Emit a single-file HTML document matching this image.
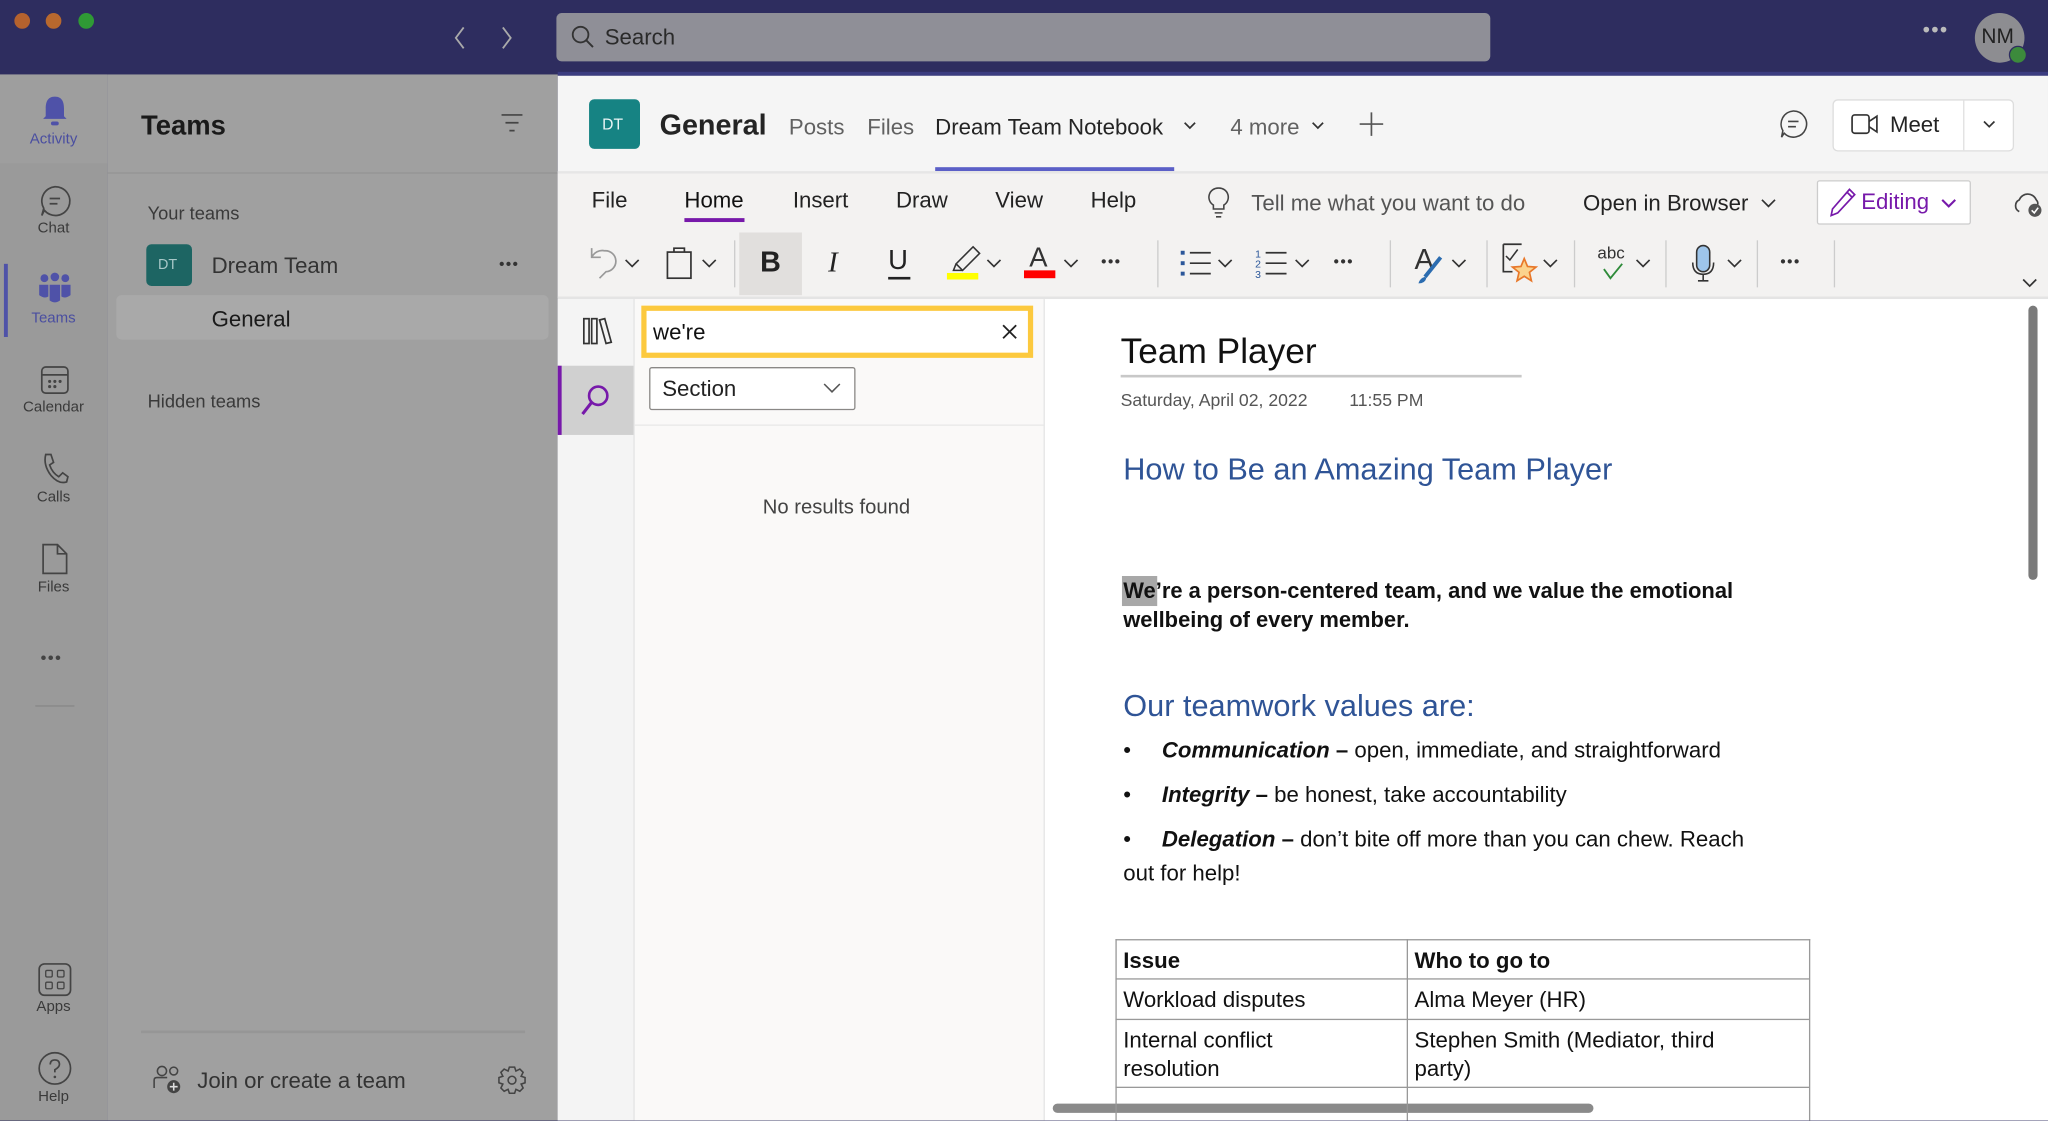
<!DOCTYPE html>
<html><head><meta charset="utf-8">
<style>
html,body{margin:0;padding:0;width:2048px;height:1120px;overflow:hidden;background:#2e2d5f;}
#w{position:absolute;left:0;top:0;width:1568px;height:858px;transform:scale(1.30612);transform-origin:0 0;font-family:"Liberation Sans",sans-serif;overflow:hidden;}
.a{position:absolute;}
.t{position:absolute;white-space:nowrap;line-height:1;}
svg{position:absolute;overflow:visible;}
.rl{position:absolute;left:0;width:82px;text-align:center;font-size:11.5px;color:#3a3a3a;line-height:1;}
.chev{stroke:#333;stroke-width:1.3;fill:none;}
.doc{color:#111;font-size:17px;}
</style></head><body><div id="w">
<div class="a" style="left:0;top:0;width:1568px;height:57px;background:#2e2d5f;"></div>
<div class="a" style="left:427px;top:55px;width:1141px;height:3px;background:#3b3c80;"></div>
<div class="a" style="left:11px;top:10px;width:12px;height:12px;border-radius:50%;background:#b5622e;"></div>
<div class="a" style="left:35px;top:10px;width:12px;height:12px;border-radius:50%;background:#b8682e;"></div>
<div class="a" style="left:60px;top:10px;width:12px;height:12px;border-radius:50%;background:#2f9a35;"></div>
<svg style="left:346px;top:20px" width="12" height="18"><path d="M9 1 L3 9 L9 17" stroke="#aaa" stroke-width="1.4" fill="none"/></svg>
<svg style="left:382px;top:20px" width="12" height="18"><path d="M3 1 L9 9 L3 17" stroke="#aaa" stroke-width="1.4" fill="none"/></svg>
<div class="a" style="left:426px;top:10px;width:715px;height:37px;background:#8f8f97;border-radius:4px;"></div>
<svg style="left:437px;top:19px" width="20" height="20"><circle cx="7.5" cy="7.5" r="6" stroke="#333" stroke-width="1.4" fill="none"/><path d="M12 12 L17 17" stroke="#333" stroke-width="1.5"/></svg>
<div class="t" style="left:463px;top:20px;font-size:17px;color:#2a2a2a;">Search</div>
<div class="t" style="left:1472px;top:16px;font-size:16px;color:#bbb;letter-spacing:1px">•••</div>
<div class="a" style="left:1512px;top:10px;width:38px;height:38px;border-radius:50%;background:#8d8d91;"></div>
<div class="t" style="left:1517px;top:21px;font-size:16px;color:#222;">NM</div>
<div class="a" style="left:1538px;top:35px;width:12px;height:12px;border-radius:50%;background:#3c8a3c;border:1px solid #2e2d5f;"></div>
<div class="a" style="left:0;top:57px;width:82px;height:801px;background:#9a9a9a;"></div>
<div class="a" style="left:0;top:57px;width:82px;height:68px;background:#9e9e9e;"></div>
<svg style="left:30px;top:72px" width="24" height="26"><path d="M12 2 C6 2 5 7 5 11 L5 17 L3 19 L21 19 L19 17 L19 11 C19 7 18 2 12 2Z" fill="#4f52a8"/><rect x="9" y="21" width="6" height="3" rx="1.5" fill="#4f52a8"/></svg>
<div class="rl" style="top:102px;color:#4a4ea0;">Activity</div>
<svg style="left:29px;top:141px" width="26" height="26"><path d="M13 2 A11 11 0 1 1 5 20 L3 24 L4.5 18.5 A11 11 0 0 1 13 2Z" stroke="#444" stroke-width="1.3" fill="none"/><path d="M9 11 H17 M9 15 H15" stroke="#444" stroke-width="1.3"/></svg>
<div class="rl" style="top:170px;">Chat</div>
<div class="a" style="left:3px;top:202px;width:3px;height:56px;background:#4f52a8;"></div>
<svg style="left:28px;top:208px" width="28" height="26"><circle cx="6" cy="5" r="3" fill="#4f52a8"/><circle cx="14" cy="4" r="3.3" fill="#4f52a8"/><circle cx="22" cy="5" r="3" fill="#4f52a8"/><path d="M2 10 H9 V19 Q6 21 2 18Z M10 10 H18 V22 Q14 25 10 22Z M19 10 H26 V18 Q22 21 19 19Z" fill="#4f52a8"/></svg>
<div class="rl" style="top:239px;color:#4a4ea0;">Teams</div>
<svg style="left:30px;top:279px" width="24" height="24"><rect x="2" y="2" width="20" height="20" rx="3" stroke="#444" stroke-width="1.3" fill="none"/><path d="M2 8 H22" stroke="#444" stroke-width="1.3"/><circle cx="8" cy="13" r="1.2" fill="#444"/><circle cx="12" cy="13" r="1.2" fill="#444"/><circle cx="16" cy="13" r="1.2" fill="#444"/><circle cx="8" cy="17" r="1.2" fill="#444"/><circle cx="12" cy="17" r="1.2" fill="#444"/></svg>
<div class="rl" style="top:307px;">Calendar</div>
<svg style="left:31px;top:346px" width="22" height="26"><path d="M4 2 L8 2 L10 8 L7 10 Q9 16 14 19 L17 16 L21 19 L20 23 Q14 25 8 18 Q2 10 4 2Z" stroke="#444" stroke-width="1.3" fill="none"/></svg>
<div class="rl" style="top:376px;">Calls</div>
<svg style="left:31px;top:415px" width="22" height="26"><path d="M2 2 H13 L20 9 V24 H2Z M13 2 V9 H20" stroke="#444" stroke-width="1.3" fill="none"/></svg>
<div class="rl" style="top:445px;">Files</div>
<div class="t" style="left:31px;top:497px;font-size:13px;color:#444;letter-spacing:1px">•••</div>
<div class="a" style="left:27px;top:540px;width:30px;height:1px;background:#888;"></div>
<svg style="left:29px;top:737px" width="26" height="26"><rect x="1" y="1" width="24" height="24" rx="4" stroke="#444" stroke-width="1.3" fill="none"/><rect x="6" y="6" width="5" height="5" rx="1" stroke="#444" fill="none"/><rect x="15" y="6" width="5" height="5" rx="1" stroke="#444" fill="none"/><rect x="6" y="15" width="5" height="5" rx="1" stroke="#444" fill="none"/><rect x="15" y="15" width="5" height="5" rx="1" stroke="#444" fill="none"/></svg>
<div class="rl" style="top:766px;">Apps</div>
<svg style="left:29px;top:805px" width="26" height="26"><circle cx="13" cy="13" r="12" stroke="#444" stroke-width="1.3" fill="none"/><path d="M9.5 10 Q9.5 6.5 13 6.5 Q16.5 6.5 16.5 10 Q16.5 12 13 14 V16" stroke="#444" stroke-width="1.3" fill="none"/><circle cx="13" cy="19.5" r="1" fill="#444"/></svg>
<div class="rl" style="top:835px;">Help</div>
<div class="a" style="left:82px;top:57px;width:345px;height:801px;background:#a0a0a0;"></div>
<div class="t" style="left:108px;top:86px;font-size:21px;font-weight:bold;color:#1a1a1a;">Teams</div>
<svg style="left:383px;top:87px" width="18" height="14"><path d="M1 1 H17 M4 7 H14 M7 13 H11" stroke="#444" stroke-width="1.3"/></svg>
<div class="a" style="left:82px;top:132px;width:345px;height:1px;background:#949494;"></div>
<div class="t" style="left:113px;top:156px;font-size:14px;color:#3a3a3a;">Your teams</div>
<div class="a" style="left:112px;top:187px;width:35px;height:32px;border-radius:4px;background:#1d6563;"></div>
<div class="t" style="left:121px;top:198px;font-size:11px;color:#a8c8c8;">DT</div>
<div class="t" style="left:162px;top:195px;font-size:17px;color:#333;">Dream Team</div>
<div class="t" style="left:382px;top:196px;font-size:12px;color:#333;letter-spacing:1px">•••</div>
<div class="a" style="left:89px;top:226px;width:331px;height:34px;border-radius:4px;background:#a9a9a9;"></div>
<div class="t" style="left:162px;top:236px;font-size:17px;color:#1a1a1a;">General</div>
<div class="t" style="left:113px;top:300px;font-size:14px;color:#3a3a3a;">Hidden teams</div>
<div class="a" style="left:108px;top:789px;width:294px;height:2px;background:#969696;"></div>
<svg style="left:117px;top:815px" width="22" height="24"><circle cx="7" cy="5" r="3.5" stroke="#444" stroke-width="1.2" fill="none"/><circle cx="16" cy="5" r="3" stroke="#444" stroke-width="1.2" fill="none"/><path d="M1 18 V12 Q1 10 3 10 H11" stroke="#444" stroke-width="1.2" fill="none"/><circle cx="16" cy="17" r="5" fill="#444"/><path d="M16 14 V20 M13 17 H19" stroke="#ddd" stroke-width="1.2"/></svg>
<div class="t" style="left:151px;top:819px;font-size:17px;color:#333;">Join or create a team</div>
<svg style="left:381px;top:816px" width="22" height="22"><circle cx="11" cy="11" r="3" stroke="#444" stroke-width="1.2" fill="none"/><path d="M9 1 H13 L14 4 L17 2.5 L19.5 5 L18 8 L21 9 V13 L18 14 L19.5 17 L17 19.5 L14 18 L13 21 H9 L8 18 L5 19.5 L2.5 17 L4 14 L1 13 V9 L4 8 L2.5 5 L5 2.5 L8 4Z" stroke="#444" stroke-width="1.2" fill="none"/></svg>
<div class="a" style="left:427px;top:58px;width:1141px;height:800px;background:#f5f5f5;"></div>
<div class="a" style="left:451px;top:76px;width:39px;height:38px;border-radius:4px;background:#168383;"></div>
<div class="t" style="left:461px;top:89px;font-size:12px;color:#e8f4f4;">DT</div>
<div class="t" style="left:505px;top:85px;font-size:22px;font-weight:bold;color:#242424;">General</div>
<div class="t" style="left:604px;top:89px;font-size:17px;color:#616161;">Posts</div>
<div class="t" style="left:664px;top:89px;font-size:17px;color:#616161;">Files</div>
<div class="t" style="left:716px;top:89px;font-size:17px;color:#242424;">Dream Team Notebook</div>
<svg style="left:906px;top:93px" width="10" height="7"><path d="M1 1 L5 5 L9 1" class="chev" stroke="#666"/></svg>
<div class="t" style="left:942px;top:89px;font-size:17px;color:#616161;">4 more</div>
<svg style="left:1004px;top:93px" width="10" height="7"><path d="M1 1 L5 5 L9 1" class="chev" stroke="#666"/></svg>
<svg style="left:1041px;top:86px" width="18" height="18"><path d="M9 0 V18 M0 9 H18" stroke="#555" stroke-width="1.3"/></svg>
<div class="a" style="left:716px;top:128px;width:183px;height:3px;background:#5b5fc7;"></div>
<div class="a" style="left:427px;top:131px;width:1141px;height:2px;background:#e6e6e6;"></div>
<svg style="left:1362px;top:84px" width="22" height="22"><path d="M11 1 A10 10 0 1 1 4 18 L2 21 L3 16 A10 10 0 0 1 11 1Z" stroke="#444" stroke-width="1.2" fill="none"/><path d="M7 9 H15 M7 13 H13" stroke="#444" stroke-width="1.2"/></svg>
<div class="a" style="left:1403px;top:76px;width:137px;height:38px;background:#fff;border:1px solid #ddd;border-radius:4px;"></div>
<div class="a" style="left:1503px;top:77px;width:1px;height:38px;background:#e0e0e0;"></div>
<svg style="left:1417px;top:86px" width="22" height="18"><rect x="1" y="2" width="13" height="14" rx="2" stroke="#333" stroke-width="1.3" fill="none"/><path d="M14 7 L20 3 V15 L14 11" stroke="#333" stroke-width="1.3" fill="none"/></svg>
<div class="t" style="left:1447px;top:87px;font-size:17px;color:#242424;">Meet</div>
<svg style="left:1518px;top:92px" width="10" height="7"><path d="M1 1 L5 5 L9 1" class="chev"/></svg>
<div class="a" style="left:427px;top:133px;width:1141px;height:95px;background:#f3f2f1;"></div>
<div class="a" style="left:427px;top:227px;width:1141px;height:2px;background:#e4e4e4;"></div>
<div class="t" style="left:453px;top:145px;font-size:17px;color:#222;">File</div>
<div class="t" style="left:524px;top:145px;font-size:17px;color:#111;">Home</div>
<div class="a" style="left:524px;top:167px;width:46px;height:3px;background:#7719aa;"></div>
<div class="t" style="left:607px;top:145px;font-size:17px;color:#222;">Insert</div>
<div class="t" style="left:686px;top:145px;font-size:17px;color:#222;">Draw</div>
<div class="t" style="left:762px;top:145px;font-size:17px;color:#222;">View</div>
<div class="t" style="left:835px;top:145px;font-size:17px;color:#222;">Help</div>
<svg style="left:924px;top:143px" width="18" height="24"><path d="M9 1 A7 7 0 0 0 5 14 V17 H13 V14 A7 7 0 0 0 9 1Z M6 20 H12 M7 23 H11" stroke="#444" stroke-width="1.2" fill="none"/></svg>
<div class="t" style="left:958px;top:147px;font-size:17px;color:#555;">Tell me what you want to do</div>
<div class="t" style="left:1212px;top:147px;font-size:17px;color:#222;">Open in Browser</div>
<svg style="left:1348px;top:152px" width="12" height="8"><path d="M1 1 L6 6 L11 1" class="chev"/></svg>
<div class="a" style="left:1391px;top:138px;width:116px;height:32px;background:#fff;border:1px solid #ccc;border-radius:2px;"></div>
<svg style="left:1401px;top:144px" width="20" height="22"><path d="M15 1 L19 5 L6 19 L1 21 L2 16Z M13 3 L17 7" stroke="#7719aa" stroke-width="1.3" fill="none"/></svg>
<div class="t" style="left:1425px;top:146px;font-size:17px;color:#7719aa;">Editing</div>
<svg style="left:1486px;top:152px" width="12" height="8"><path d="M1 1 L6 6 L11 1" stroke="#7719aa" stroke-width="1.6" fill="none"/></svg>
<svg style="left:1540px;top:145px" width="24" height="22"><path d="M6 17 A5 5 0 0 1 6 8 A7 7 0 0 1 19 8 A4 4 0 0 1 20 12" stroke="#444" stroke-width="1.3" fill="none"/><circle cx="18" cy="16" r="5" fill="#555"/><path d="M15.5 16 L17.5 18 L20.5 14" stroke="#fff" stroke-width="1.2" fill="none"/></svg>
<svg style="left:449px;top:188px" width="24" height="26"><path d="M4 2 V9 H11 M4 9 A9 9 0 0 1 14 4 A8 8 0 0 1 15 20 L10 25" stroke="#999" stroke-width="1.3" fill="none"/></svg>
<svg style="left:478px;top:198px" width="12" height="8"><path d="M1 1 L6 6 L11 1" class="chev"/></svg>
<svg style="left:510px;top:188px" width="20" height="26"><rect x="1" y="5" width="18" height="20" stroke="#333" stroke-width="1.3" fill="none"/><path d="M6 5 V2 H14 V5" stroke="#333" stroke-width="1.3" fill="none"/></svg>
<svg style="left:537px;top:198px" width="12" height="8"><path d="M1 1 L6 6 L11 1" class="chev"/></svg>
<div class="a" style="left:562px;top:184px;width:1px;height:36px;background:#ccc;"></div>
<div class="a" style="left:566px;top:178px;width:48px;height:48px;background:#e1dfdd;"></div>
<div class="t" style="left:582px;top:190px;font-size:22px;font-weight:bold;color:#222;">B</div>
<div class="t" style="left:634px;top:190px;font-size:22px;font-style:italic;color:#222;font-family:'Liberation Serif',serif;">I</div>
<div class="t" style="left:680px;top:189px;font-size:21px;color:#222;">U</div>
<div class="a" style="left:680px;top:212px;width:17px;height:1.5px;background:#222;"></div>
<svg style="left:727px;top:188px" width="24" height="24"><path d="M18 1 L23 6 L10 19 L5 14Z M5 14 L3 19 L10 19" stroke="#333" stroke-width="1.2" fill="none"/></svg>
<div class="a" style="left:725px;top:209px;width:24px;height:5px;background:#ffff00;"></div>
<svg style="left:755px;top:198px" width="12" height="8"><path d="M1 1 L6 6 L11 1" class="chev"/></svg>
<div class="t" style="left:788px;top:187px;font-size:21px;color:#333;">A</div>
<div class="a" style="left:784px;top:207px;width:24px;height:6px;background:#f00;"></div>
<svg style="left:814px;top:198px" width="12" height="8"><path d="M1 1 L6 6 L11 1" class="chev"/></svg>
<div class="t" style="left:843px;top:194px;font-size:12px;color:#333;letter-spacing:1px">•••</div>
<div class="a" style="left:886px;top:184px;width:1px;height:36px;background:#ccc;"></div>
<svg style="left:903px;top:189px" width="26" height="24"><rect x="1" y="3" width="3" height="3" fill="#2b579a"/><rect x="1" y="11" width="3" height="3" fill="#2b579a"/><rect x="1" y="19" width="3" height="3" fill="#2b579a"/><path d="M8 4.5 H24 M8 12.5 H24 M8 20.5 H24" stroke="#333" stroke-width="1.3"/></svg>
<svg style="left:932px;top:198px" width="12" height="8"><path d="M1 1 L6 6 L11 1" class="chev"/></svg>
<svg style="left:961px;top:189px" width="26" height="26"><text x="0" y="8" font-size="8" fill="#2b579a" font-family="Liberation Sans">1</text><text x="0" y="16" font-size="8" fill="#2b579a" font-family="Liberation Sans">2</text><text x="0" y="24" font-size="8" fill="#2b579a" font-family="Liberation Sans">3</text><path d="M8 4.5 H24 M8 12.5 H24 M8 20.5 H24" stroke="#333" stroke-width="1.3"/></svg>
<svg style="left:991px;top:198px" width="12" height="8"><path d="M1 1 L6 6 L11 1" class="chev"/></svg>
<div class="t" style="left:1021px;top:194px;font-size:12px;color:#333;letter-spacing:1px">•••</div>
<div class="a" style="left:1064px;top:184px;width:1px;height:36px;background:#ccc;"></div>
<div class="t" style="left:1083px;top:188px;font-size:22px;color:#333;">A</div>
<svg style="left:1085px;top:196px" width="20" height="22"><path d="M18 1 L6 16" stroke="#2b6cb0" stroke-width="3"/><path d="M6 16 Q2 17 1 21 Q6 21 7 17Z" fill="#2b6cb0"/></svg>
<svg style="left:1111px;top:198px" width="12" height="8"><path d="M1 1 L6 6 L11 1" class="chev"/></svg>
<div class="a" style="left:1138px;top:184px;width:1px;height:36px;background:#ccc;"></div>
<svg style="left:1150px;top:186px" width="28" height="30"><path d="M1 1 H15 M1 1 V22 H8" stroke="#333" stroke-width="1.3" fill="none"/><path d="M3 10 L6 13 L12 5" stroke="#333" stroke-width="1.2" fill="none"/><path d="M17 12 L19.5 18 L26 18.5 L21 22.5 L22.5 29 L17 25.5 L11.5 29 L13 22.5 L8 18.5 L14.5 18Z" stroke="#e8782a" stroke-width="1.3" fill="#fbd38d"/></svg>
<svg style="left:1181px;top:198px" width="12" height="8"><path d="M1 1 L6 6 L11 1" class="chev"/></svg>
<div class="a" style="left:1205px;top:184px;width:1px;height:36px;background:#ccc;"></div>
<div class="t" style="left:1223px;top:187px;font-size:13px;color:#333;">abc</div>
<svg style="left:1227px;top:201px" width="16" height="14"><path d="M1 5 L6 12 L15 1" stroke="#2e8b3a" stroke-width="1.4" fill="none"/></svg>
<svg style="left:1252px;top:198px" width="12" height="8"><path d="M1 1 L6 6 L11 1" class="chev"/></svg>
<div class="a" style="left:1275px;top:184px;width:1px;height:36px;background:#ccc;"></div>
<svg style="left:1294px;top:187px" width="20" height="30"><rect x="5" y="1" width="10" height="20" rx="5" fill="#9ec5ea" stroke="#333" stroke-width="1.2"/><path d="M2 14 Q2 23 10 23 Q18 23 18 14 M10 23 V28 M6 28 H14" stroke="#333" stroke-width="1.2" fill="none"/></svg>
<svg style="left:1322px;top:198px" width="12" height="8"><path d="M1 1 L6 6 L11 1" class="chev"/></svg>
<div class="a" style="left:1345px;top:184px;width:1px;height:36px;background:#ccc;"></div>
<div class="t" style="left:1363px;top:194px;font-size:12px;color:#333;letter-spacing:1px">•••</div>
<div class="a" style="left:1404px;top:184px;width:1px;height:36px;background:#ccc;"></div>
<svg style="left:1548px;top:213px" width="12" height="8"><path d="M1 1 L6 6 L11 1" class="chev"/></svg>
<div class="a" style="left:427px;top:229px;width:58px;height:629px;background:#f4f4f4;border-right:1px solid #e2e2e2;"></div>
<svg style="left:446px;top:242px" width="24" height="24"><rect x="1" y="2" width="4" height="19" stroke="#333" stroke-width="1.3" fill="none"/><rect x="7" y="2" width="4" height="19" stroke="#333" stroke-width="1.3" fill="none"/><path d="M13 3 L17 2 L22 20 L18 21Z" stroke="#333" stroke-width="1.3" fill="none"/></svg>
<div class="a" style="left:427px;top:280px;width:58px;height:53px;background:#d0d0d0;"></div>
<div class="a" style="left:427px;top:280px;width:3px;height:53px;background:#7719aa;"></div>
<svg style="left:444px;top:294px" width="24" height="26"><circle cx="14" cy="9" r="7" stroke="#7719aa" stroke-width="2" fill="none"/><path d="M9 14 L2 23" stroke="#7719aa" stroke-width="2.4"/></svg>
<div class="a" style="left:486px;top:229px;width:313px;height:629px;background:#faf9f8;border-right:1px solid #e4e4e4;"></div>
<div class="a" style="left:491px;top:234px;width:292px;height:32px;background:#fff;border:4px solid #fcc93e;"></div>
<div class="t" style="left:500px;top:246px;font-size:17px;color:#111;">we're</div>
<svg style="left:767px;top:248px" width="12" height="12"><path d="M1 1 L11 11 M11 1 L1 11" stroke="#222" stroke-width="1.4"/></svg>
<div class="a" style="left:497px;top:281px;width:156px;height:31px;background:#fff;border:1px solid #8a8886;border-radius:2px;"></div>
<div class="t" style="left:507px;top:289px;font-size:17px;color:#222;">Section</div>
<svg style="left:630px;top:293px" width="14" height="9"><path d="M1 1 L7 7 L13 1" stroke="#555" stroke-width="1.2" fill="none"/></svg>
<div class="a" style="left:486px;top:325px;width:313px;height:1px;background:#e8e8e8;"></div>
<div class="t" style="left:584px;top:381px;font-size:15.5px;color:#444;">No results found</div>
<div class="a" style="left:800px;top:229px;width:768px;height:629px;background:#fff;"></div>
<div class="a" style="left:1553px;top:234px;width:7px;height:210px;background:#7a7a7a;border-radius:4px;"></div>
<div class="a" style="left:806px;top:845px;width:414px;height:7px;background:#8a8a8a;border-radius:4px;"></div>
<div class="t" style="left:858px;top:256px;font-size:27px;color:#111;">Team Player</div>
<div class="a" style="left:858px;top:287px;width:307px;height:1.5px;background:#c8c8c8;"></div>
<div class="t" style="left:858px;top:300px;font-size:13.5px;color:#555;">Saturday, April 02, 2022</div>
<div class="t" style="left:1033px;top:300px;font-size:13.5px;color:#555;">11:55 PM</div>
<div class="t" style="left:860px;top:348px;font-size:23.5px;color:#2f5496;">How to Be an Amazing Team Player</div>
<div class="a" style="left:859px;top:441px;width:27px;height:23px;background:#a8a8a8;"></div>
<div class="t doc" style="left:860px;top:445px;font-weight:bold;font-size:16.8px;">We’re a person-centered team, and we value the emotional</div>
<div class="t doc" style="left:860px;top:467px;font-weight:bold;font-size:16.8px;">wellbeing of every member.</div>
<div class="t" style="left:860px;top:529px;font-size:23.5px;color:#2f5496;">Our teamwork values are:</div>
<div class="t doc" style="left:860px;top:566px;">•&nbsp;&nbsp;&nbsp;&nbsp;&nbsp;<b><i>Communication</i> –</b> open, immediate, and straightforward</div>
<div class="t doc" style="left:860px;top:600px;">•&nbsp;&nbsp;&nbsp;&nbsp;&nbsp;<b><i>Integrity</i> –</b> be honest, take accountability</div>
<div class="t doc" style="left:860px;top:634px;">•&nbsp;&nbsp;&nbsp;&nbsp;&nbsp;<b><i>Delegation</i> –</b> don’t bite off more than you can chew. Reach</div>
<div class="t doc" style="left:860px;top:660px;">out for help!</div>
<div class="a" style="left:854px;top:719px;width:530px;height:140px;border:1px solid #999;border-bottom:none;"></div>
<div class="a" style="left:1077px;top:719px;width:1px;height:139px;background:#999;"></div>
<div class="a" style="left:854px;top:749px;width:531px;height:1px;background:#999;"></div>
<div class="a" style="left:854px;top:780px;width:531px;height:1px;background:#999;"></div>
<div class="a" style="left:854px;top:832px;width:531px;height:1px;background:#999;"></div>
<div class="t doc" style="left:860px;top:727px;font-weight:bold;">Issue</div>
<div class="t doc" style="left:1083px;top:727px;font-weight:bold;">Who to go to</div>
<div class="t doc" style="left:860px;top:757px;">Workload disputes</div>
<div class="t doc" style="left:1083px;top:757px;">Alma Meyer (HR)</div>
<div class="t doc" style="left:860px;top:788px;">Internal conflict</div>
<div class="t doc" style="left:860px;top:810px;">resolution</div>
<div class="t doc" style="left:1083px;top:788px;">Stephen Smith (Mediator, third</div>
<div class="t doc" style="left:1083px;top:810px;">party)</div>
</div></body></html>
